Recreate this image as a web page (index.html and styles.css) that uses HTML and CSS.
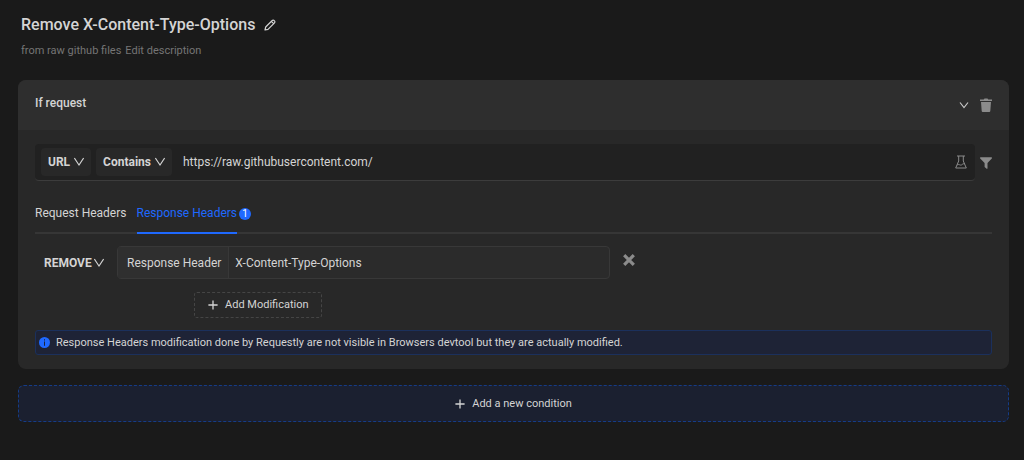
FILE: index.html
```html
<!DOCTYPE html>
<html lang="en">
<head>
<meta charset="utf-8">
<meta name="viewport" content="width=device-width, initial-scale=1">
<title>Remove X-Content-Type-Options</title>
<link rel="stylesheet" href="styles.css">
</head>
<body>
<main class="page">
  <header class="rule-header">
    <div class="title-row">
      <h1 class="title">Remove X-Content-Type-Options</h1>
      <button class="icon-button" type="button" aria-label="Edit name">
        <svg viewBox="0 0 12 12" width="12" height="12" fill="none" stroke="currentColor" stroke-width="1.200" stroke-linejoin="round"><path d="M1 11l.7-3L8.200 1.500a1.300 1.300 0 0 1 1.900 0l.4.4a1.300 1.300 0 0 1 0 1.900L4 10.300zM7.300 2.400l2.300 2.300"/></svg>
      </button>
    </div>
    <div class="description">
      <span>from raw github files</span>
      <button type="button">Edit description</button>
    </div>
  </header>

  <section class="card">
    <div class="card-header">
      <h2 class="card-title">If request</h2>
      <div class="card-actions">
        <button class="icon-button light" type="button" aria-label="Collapse">
          <svg viewBox="0 0 10 10" width="10" height="10" fill="none" stroke="currentColor" stroke-width="1.200"><path d="M1 2.500L5 7.500 9 2.500"/></svg>
        </button>
        <button class="icon-button" type="button" aria-label="Delete condition">
          <svg viewBox="0 0 12 14" width="12" height="14" fill="currentColor"><path d="M0 1.500h3.700L4.500.4h3l.8 1.100H12v1.400H0zM1 4h10l-.7 9a1 1 0 0 1-1 .9H2.700a1 1 0 0 1-1-.9z"/></svg>
        </button>
      </div>
    </div>
    <div class="card-body">
      <div class="source-row">
        <div class="source-box">
          <button class="select-button" type="button">URL
            <svg viewBox="0 0 10 10" width="10" height="10" fill="none" stroke="currentColor" stroke-width="1.100"><path d="M.4 1L5 8 9.600 1"/></svg>
          </button>
          <button class="select-button" type="button">Contains
            <svg viewBox="0 0 10 10" width="10" height="10" fill="none" stroke="currentColor" stroke-width="1.100"><path d="M.4 1L5 8 9.600 1"/></svg>
          </button>
          <input class="url-input" type="text" aria-label="Source value" value="https://raw.githubusercontent.com/">
          <button class="icon-button" type="button" aria-label="Test URL condition">
            <svg viewBox="0 0 12 14" width="12" height="14" fill="none" stroke="currentColor"><path d="M2 1h8M3.700 1v5L.7 13h10.600L8.300 6V1M2.200 9.800c1.700-1.100 3 .9 4.400.1 1-.8 1.700-1.500 3-1"/></svg>
          </button>
        </div>
        <button class="icon-button" type="button" aria-label="Filters">
          <svg viewBox="0 0 12 12" width="12" height="12" fill="currentColor"><path d="M.6.3h10.800c.6 0 .8.7.4 1.100L7.500 6v5.300c0 .5-.5.7-.9.4l-1.700-1.400a.7.700 0 0 1-.3-.6V6L.200 1.400C-.2 1 0 .3.600.3z"/></svg>
        </button>
      </div>

      <div class="tabs" role="tablist">
        <button class="tab" type="button" role="tab" aria-selected="false">Request Headers</button>
        <button class="tab active" type="button" role="tab" aria-selected="true">Response Headers</button>
        <span class="badge">1</span>
      </div>

      <div class="modification-row">
        <button class="type-button" type="button">REMOVE
          <svg viewBox="0 0 10 10" width="10" height="10" fill="none" stroke="currentColor" stroke-width="1.100"><path d="M.4 1L5 8 9.600 1"/></svg>
        </button>
        <div class="input-group">
          <label class="addon" for="header-name">Response Header</label>
          <input class="header-input" id="header-name" type="text" value="X-Content-Type-Options">
        </div>
        <button class="icon-button remove" type="button" aria-label="Remove modification">
          <svg viewBox="0 0 12 12" width="12" height="12" fill="none" stroke="currentColor" stroke-width="3.200"><path d="M1.200 1.200l9.600 9.600M10.800 1.200L1.200 10.800"/></svg>
        </button>
      </div>

      <button class="add-modification" type="button">
        <svg viewBox="0 0 10 10" width="10" height="10" fill="none" stroke="currentColor" stroke-width="1.300"><path d="M5 .4v9.200M.4 5h9.200"/></svg>
        Add Modification
      </button>

      <div class="notice" role="note">
        <svg viewBox="0 0 12 12" width="11" height="11"><circle cx="6" cy="6" r="6" fill="#1f69ff"/><path d="M6 2.500v1.200M6 5v4.500" stroke="#1c2237" stroke-width="1.100"/></svg>
        <span>Response Headers modification done by Requestly are not visible in Browsers devtool but they are actually modified.</span>
      </div>
    </div>
  </section>

  <button class="add-condition" type="button">
    <svg viewBox="0 0 10 10" width="10" height="10" fill="none" stroke="currentColor" stroke-width="1.300"><path d="M5 .4v9.200M.4 5h9.200"/></svg>
    Add a new condition
  </button>
</main>
</body>
</html>
```

FILE: styles.css
```css
* {
  box-sizing: border-box;
}

body {
  margin: 0;
  background: #1a1a1a;
  color: #d4d4d4;
  font: 12px/18px Roboto, sans-serif;
}

button,
input {
  margin: 0;
  padding: 0;
  border: 0;
  background: none;
  color: inherit;
  font: inherit;
}

button {
  cursor: pointer;
}

svg {
  display: block;
  flex: none;
}

.page {
  padding: 14px 15px 38px 18px;
}

.rule-header {
  padding: 0 3px;
  margin-bottom: 20px;
}

.title-row {
  display: flex;
  align-items: center;
  gap: 9px;
}

.title {
  margin: 0;
  font-size: 16px;
  line-height: 22px;
  font-weight: 500;
}

.title-row .icon-button {
  color: #d4d4d4;
}

.description {
  display: flex;
  gap: 4px;
  margin-top: 6px;
  font-size: 11px;
  color: #757575;
}

.icon-button {
  display: flex;
  align-items: center;
  justify-content: center;
  color: #8b8b8b;
}

.icon-button.light {
  color: #c8c8c8;
}

.card {
  border-radius: 8px;
  overflow: hidden;
  background: #282828;
}

.card-header {
  display: flex;
  align-items: center;
  justify-content: space-between;
  padding: 14px 17px;
  background: #2e2e2e;
}

.card-title {
  margin: 0 0 4px;
  font-size: 12px;
  font-weight: 500;
}

.card-actions {
  display: flex;
  gap: 11px;
}

.card-body {
  padding: 14px 17px;
}

.source-row {
  display: flex;
  align-items: center;
  gap: 5px;
}

.source-box {
  display: flex;
  flex: 1;
  align-items: center;
  gap: 5px;
  height: 37px;
  padding: 0 8px 0 6px;
  border-radius: 4px;
  border-bottom: 1px solid #3c3c3c;
  background: #212121;
}

.select-button {
  display: flex;
  align-items: center;
  gap: 4px;
  height: 28px;
  padding: 0 7px;
  border-radius: 4px;
  background: #282828;
  font-weight: 700;
}

.url-input {
  flex: 1;
  min-width: 0;
  padding: 0 6px;
}

.tabs {
  display: flex;
  align-items: flex-start;
  height: 30px;
  margin-top: 23px;
  border-bottom: 2px solid #363636;
}

.tab {
  height: 30px;
  padding-bottom: 10px;
  margin-right: 10px;
  border-bottom: 2px solid transparent;
}

.tab.active {
  margin-right: 2px;
  border-color: #1f69ff;
  color: #1f69ff;
}

.badge {
  width: 12px;
  height: 12px;
  margin-top: 4px;
  border-radius: 50%;
  background: #1f69ff;
  color: #fff;
  font-size: 10px;
  line-height: 12px;
  text-align: center;
}

.modification-row {
  display: flex;
  align-items: center;
  padding-left: 9px;
  margin-top: 12px;
}

.type-button {
  display: flex;
  align-items: center;
  gap: 2px;
  width: 73px;
  font-weight: 700;
}

.input-group {
  display: flex;
  flex: 0 1 493px;
  height: 33px;
  border: 1px solid #383838;
  border-radius: 4px;
  background: #2b2b2b;
}

.addon {
  display: flex;
  align-items: center;
  padding: 0 7px 0 9px;
  border-right: 1px solid #383838;
  background: #2f2f2f;
}

.header-input {
  flex: 1;
  min-width: 0;
  padding: 0 6px;
}

.remove {
  margin: 0 0 5px 13px;
}

.add-modification {
  display: flex;
  align-items: center;
  gap: 7px;
  height: 26px;
  padding: 0 12px 0 13px;
  margin: 13px 0 0 159px;
  border: 1px dashed #454545;
  border-radius: 3px;
  font-size: 11px;
}

.notice {
  display: flex;
  align-items: center;
  gap: 6px;
  height: 25px;
  padding: 0 3px;
  margin-top: 12px;
  border: 1px solid #1b305c;
  border-radius: 3px;
  background: #1e2336;
  font-size: 11px;
}

.add-condition {
  display: flex;
  align-items: center;
  justify-content: center;
  gap: 7px;
  width: 100%;
  height: 37px;
  margin-top: 16px;
  border: 1px dashed #153c88;
  border-radius: 6px;
  background: #1b2030;
  font-size: 11px;
}
```
